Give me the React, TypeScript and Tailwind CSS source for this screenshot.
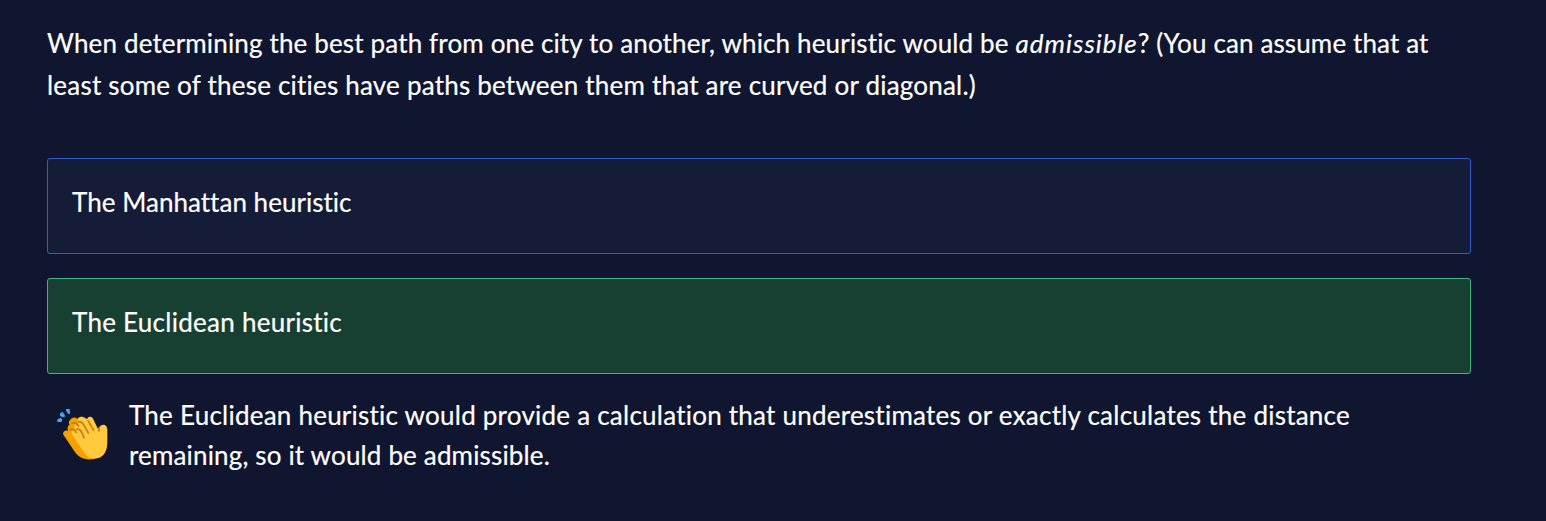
import React from 'react';

function ClapIcon() {
  return (
    <svg viewBox="45 36 162 162" className="h-[54px] w-[54px] shrink-0" aria-hidden="true">
      <g fill="#42a5f5" stroke="#42a5f5" strokeWidth="3" strokeLinejoin="round">
        <path d="M78 44 L88 43 L88 56 L85 56Z" />
        <path d="M61 56 L67 52 L74 62 L73 65 L62 63Z" />
        <path d="M52 75 L62 70 L65 72 L64 80 L53 79Z" />
      </g>
      <path
        fill="#f59f00"
        d="M90 76c5-9 15-11 22-4l40 60 12 60c-20 4-44 0-57-18-10-13-23-34-36-53-5-9 3-17 13-14-3-9 0-16 5-18-4-5-3-10 1-13Z"
      />
      <path
        fill="#ffca3e"
        d="M114 70c6-6 15-6 22 0l6 2c1-8 13-9 17-1l18 37c-1-10 3-19 13-19 8 0 12 7 12 16v36c0 32-14 49-38 50-19 0-28-12-37-27L97 120c-5-9 0-16 8-15l-1-8c-3-8 3-14 11-12l2-1c-5-5-6-10-3-14Z"
      />
      <path
        fill="none"
        stroke="#ce7c12"
        strokeWidth="5"
        strokeLinecap="round"
        d="M89 104c8-4 15 0 20 8M96 85c8-3 15 0 20 8M110 103c8-2 12 2 15 9l7 16M116 80c7 0 11 2 15 9l14 25M144 77l17 29M177 108c-1-4-1-8 1-11"
      />
    </svg>
  );
}

function Choice({ label, tone }: { label: string; tone: string }) {
  return (
    <div className={`flex h-24 items-start rounded-[3px] border pl-6 pt-[22px] leading-[42px] ${tone}`}>
      {label}
    </div>
  );
}

export default function App() {
  return (
    <main className="h-[521px] w-[1546px] bg-[#10162f] pl-[47px] pr-[75px] pt-[22px] font-['Lato','Liberation_Sans',sans-serif] text-[26px] text-white [-webkit-text-stroke:0.2px_white]">
      <p className="whitespace-nowrap leading-[42px]">
        <span className="block tracking-[0.15px]">
          When determining the best path from one city to another, which heuristic would be{' '}
          <em className="tracking-[1px]">admissible</em>
          <span className="tracking-[0.13px]">? (You can assume that at</span>
        </span>
        <span className="block tracking-[0.21px]">
          least some of these cities have paths between them that are curved or diagonal.)
        </span>
      </p>
      <div className="mt-[52px] flex flex-col gap-6">
        <Choice label="The Manhattan heuristic" tone="border-[#2b5dcb] bg-[#151c38] tracking-[0.03px]" />
        <Choice label="The Euclidean heuristic" tone="border-[#3bb584] bg-[#184032] tracking-[0.27px]" />
      </div>
      <div className="mt-[21px] flex pl-2">
        <div className="mt-3">
          <ClapIcon />
        </div>
        <p className="ml-5 whitespace-nowrap leading-10">
          <span className="block tracking-[0.235px]">
            The Euclidean heuristic would provide a calculation that underestimates or exactly calculates the distance
          </span>
          <span className="block tracking-[0.16px]">remaining, so it would be admissible.</span>
        </p>
      </div>
    </main>
  );
}
